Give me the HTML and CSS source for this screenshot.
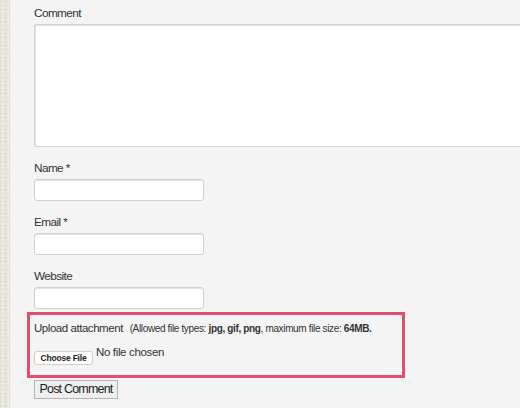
FILE: index.html
```html
<!DOCTYPE html>
<html>
<head>
<meta charset="utf-8">
<link rel="stylesheet" href="styles.css">
</head>
<body>
<div class="page">
  <div class="strip"></div>
  <form class="main">
    <label class="lbl">Comment</label>
    <div class="textarea"></div>
    <label class="lbl gap">Name *</label>
    <div class="input"></div>
    <label class="lbl gap">Email *</label>
    <div class="input"></div>
    <label class="lbl gap">Website</label>
    <div class="input"></div>
    <div class="upload">
      <div class="upline">Upload attachment <span class="note">(Allowed file types: <b>jpg, gif, png</b>, maximum file size: <b>64MB.</b></span></div>
      <div class="filerow">
        <span class="choose">Choose File</span>
        <span class="nofile">No file chosen</span>
      </div>
    </div>
    <div class="submit">Post Comment</div>
  </form>
</div>
</body>
</html>
```

FILE: styles.css
```css
html, body {
  margin: 0;
  padding: 0;
  height: 100%;
}
body {
  background: #f4f4f4;
  font-family: "Liberation Sans", Arial, sans-serif;
  color: #333;
  overflow: hidden;
}
.page {
  display: flex;
  height: 408px;
}
.strip {
  width: 10px;
  flex: none;
  background-color: #e7e5dc;
  background-image:
    radial-gradient(circle at 30% 40%, rgba(205,200,185,0.4) 0.7px, transparent 1.1px),
    radial-gradient(circle at 60% 70%, rgba(250,250,244,0.55) 0.7px, transparent 1.1px),
    radial-gradient(circle at 50% 20%, rgba(215,222,205,0.45) 0.7px, transparent 1.1px);
  background-size: 3px 4px, 5px 3px, 4px 7px;
}
.main {
  flex: 1;
  padding: 5px 0 0 24px;
  display: flex;
  flex-direction: column;
  align-items: flex-start;
}
.lbl {
  display: block;
  font-size: 11.8px;
  letter-spacing: -0.6px;
  line-height: 16px;
  margin-bottom: 3px;
}
.lbl.gap {
  margin-top: 13px;
}
.textarea {
  width: 500px;
  height: 123px;
  box-sizing: border-box;
  background: #fff;
  border: 1px solid #d2d2d2;
  border-right: none;
  border-radius: 3px 0 0 3px;
  box-shadow: inset 0 1px 0 #e4e4e4, inset 1px 0 0 #e4e4e4;
}
.input {
  width: 170px;
  height: 22px;
  box-sizing: border-box;
  background: #fff;
  border: 1px solid #d0d0d0;
  border-radius: 3px;
  box-shadow: inset 0 1px 0 #e4e4e4;
}
.upload {
  margin: 3px 0 0 -7px;
  width: 378px;
  height: 66px;
  box-sizing: border-box;
  border: 3px solid #e34f6b;
  padding: 5px 0 0 4px;
}
.upline {
  font-size: 11.5px;
  letter-spacing: -0.45px;
  line-height: 16px;
  white-space: nowrap;
}
.note {
  font-size: 10px;
  letter-spacing: -0.35px;
  margin-left: 4px;
}
.note b {
  font-weight: bold;
}
.filerow {
  display: flex;
  align-items: flex-start;
  margin-top: 7px;
}
.choose {
  margin-top: 7px;
  width: 59px;
  height: 14px;
  box-sizing: border-box;
  background: #fff;
  border: 1px solid #cfcfcf;
  border-radius: 3px;
  font-size: 8.5px;
  line-height: 12px;
  text-align: center;
  color: #222;
  letter-spacing: -0.2px;
  font-weight: bold;
  white-space: nowrap;
}
.nofile {
  margin-left: 3px;
  font-size: 11.5px;
  letter-spacing: -0.35px;
  line-height: 16px;
  color: #333;
  white-space: nowrap;
}
.submit {
  margin-top: 2px;
  width: 84px;
  height: 19px;
  box-sizing: border-box;
  border: 1px solid #b4b4b4;
  background: #efefef;
  font-size: 12.5px;
  letter-spacing: -0.8px;
  line-height: 17px;
  text-align: center;
  color: #222;
  white-space: nowrap;
}
```
